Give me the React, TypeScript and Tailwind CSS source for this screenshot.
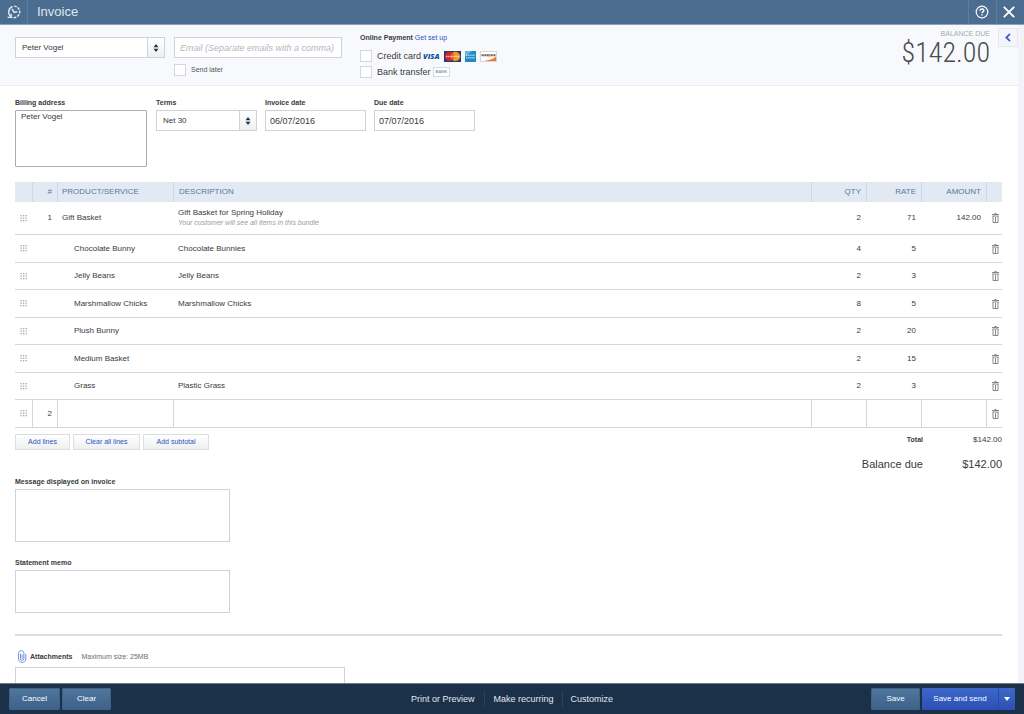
import type { ReactNode } from 'react';

type Line = { product: string; description: string; qty: number; rate: number };

const lines: Line[] = [
    { product: 'Chocolate Bunny', description: 'Chocolate Bunnies', qty: 4, rate: 5 },
    { product: 'Jelly Beans', description: 'Jelly Beans', qty: 2, rate: 3 },
    { product: 'Marshmallow Chicks', description: 'Marshmallow Chicks', qty: 8, rate: 5 },
    { product: 'Plush Bunny', description: '', qty: 2, rate: 20 },
    { product: 'Medium Basket', description: '', qty: 2, rate: 15 },
    { product: 'Grass', description: 'Plastic Grass', qty: 2, rate: 3 },
];

const field = 'border border-[#d0d3d6] bg-white text-[8px] text-[#393a3d] outline-none';
const label = 'block text-[7px] leading-[10px] font-bold text-[#393a3d]';
const check = 'size-3 shrink-0 appearance-none border border-[#d4d7dc] bg-white';
const lightButton =
    'h-4 border border-[#dcdee1] bg-linear-to-b from-white to-[#eeeff0] text-[7px] text-[#2b50c4]';
const blueButton =
    'h-[22px] rounded-[1px] border border-[#3f6285] bg-linear-to-b from-[#4f779c] to-[#3f608a] text-[8px] font-medium text-white';

function SelectBox({ id, name, value, className }: { id: string; name?: string; value: string; className: string }) {
    return (
        <div className={`relative ${className}`}>
            <select id={id} aria-label={name} className={`${field} h-[21px] w-full appearance-none px-1.5`}>
                <option>{value}</option>
            </select>
            <span className="pointer-events-none absolute inset-y-0 right-0 flex w-[18px] items-center justify-center border border-[#d0d3d6] bg-linear-to-b from-white to-[#eeeff0]">
                <svg width="6" height="8" viewBox="0 0 6 8" fill="#1d3554">
                    <path d="M3 0 5.5 3.2h-5zM3 8 .5 4.8h5z" />
                </svg>
            </span>
        </div>
    );
}

function DragHandle() {
    return (
        <svg width="7" height="7" viewBox="0 0 7 7" fill="#a5a8ab" className="ml-[5px]">
            {[0, 2.5, 5].map((y) =>
                [0.5, 3, 5.5].map((x) => <rect key={`${x}-${y}`} x={x} y={y} width="1.3" height="1.3" />),
            )}
        </svg>
    );
}

function DeleteButton() {
    return (
        <button aria-label="Delete line" className="ml-[5px] block">
            <svg width="8" height="10" viewBox="0 0 8 10" fill="none" stroke="#85888c" strokeWidth="1">
                <path d="M0 1.5h7M2.5.5h2M.5 3h6M1 3v6.5h5V3M3.5 4v5" />
            </svg>
        </button>
    );
}

function Th({ children, className = 'px-[5px]' }: { children?: ReactNode; className?: string }) {
    return <th className={`border-r border-[#cfd9e6] font-normal last:border-r-0 ${className}`}>{children}</th>;
}

function CardLogos() {
    return (
        <span className="ml-0.5 flex items-center gap-1">
            <svg width="17" height="10" viewBox="0 0 17 10">
                <text x="0" y="8" fontFamily="Open Sans, sans-serif" fontSize="7.5" fontWeight="800" fontStyle="italic" fill="#0d539c">
                    VISA
                </text>
            </svg>
            <svg width="17" height="11" viewBox="0 0 17 11">
                <rect width="17" height="11" fill="#233c70" />
                <circle cx="5.6" cy="5.5" r="4.7" fill="#d8232a" />
                <circle cx="11.4" cy="5.5" r="4.7" fill="#f09a21" />
                <path d="M8.5 1.8a4.7 4.7 0 0 1 0 7.4 4.7 4.7 0 0 1 0-7.4" fill="#df5b25" />
                <path d="M2 5.5h13" stroke="#fff" strokeWidth="1.6" strokeDasharray="1.2 .5" opacity=".7" />
            </svg>
            <svg width="11" height="11" viewBox="0 0 11 11">
                <rect width="11" height="11" fill="#2389c5" />
                <path d="M0 0h7L0 6z" fill="#62b7e0" />
                <path d="M1 4.3h9M1 6.8h9" stroke="#e7f5fc" strokeWidth="1.4" strokeDasharray="1.4 .7" opacity=".7" />
            </svg>
            <svg width="17" height="11" viewBox="0 0 17 11">
                <rect x=".5" y=".5" width="16" height="10" fill="#fff" stroke="#d5d7da" />
                <path d="M16 5.5V10H4c5-.8 9-2 12-4.5z" fill="#f27a30" />
                <path d="M1.5 4.3h14" stroke="#55504d" strokeWidth="2" strokeDasharray="1.3 .5" />
                <circle cx="9" cy="4.3" r="1.3" fill="#f27a30" />
            </svg>
        </span>
    );
}

export default function App() {
    return (
        <div className="flex h-screen flex-col bg-white font-['Liberation_Sans',Arial,sans-serif] text-[8px] leading-[10px] text-[#393a3d]">
            <header className="flex h-[25px] shrink-0 items-stretch border-b border-[#8ba3bb] bg-[#4a6d90] text-white">
                <button aria-label="Recent transactions" className="flex w-7 items-center justify-center border-r border-[#5d7d9d]">
                    <svg width="14" height="14" viewBox="0 0 14 14" fill="none" stroke="#e6edf4" strokeWidth="1.4">
                        <path d="M3.4 11.6C.6 8.6 1 3.4 5.6 1.4" />
                        <path d="M7.2 1.1a5.8 5.8 0 1 1-2.4 11.2" strokeDasharray="2.6 1.2" />
                        <path d="M.6 12.4h3.6V8.8M5 4l2.2 3.4 3.2-.8" />
                    </svg>
                </button>
                <h1 className="flex flex-1 items-center px-[9px] text-[13px] text-[#dfe8f0]">Invoice</h1>
                <button aria-label="Help" className="flex w-7 items-center justify-center border-l border-[#5d7d9d] pr-0.5">
                    <svg width="14" height="14" viewBox="0 0 14 14" fill="none" stroke="#fff" strokeWidth="1.2">
                        <circle cx="7" cy="7" r="5.8" />
                        <path d="M5.2 5.7c0-2.3 3.7-2.2 3.7-.1C8.900 7 7 6.900 7 8.300M7 9.300v1.200" strokeWidth="1.4" />
                    </svg>
                </button>
                <button aria-label="Close" className="flex w-7 items-center justify-center border-l border-[#5d7d9d] pr-1">
                    <svg width="12" height="12" viewBox="0 0 12 12" stroke="#fff" strokeWidth="1.8">
                        <path d="M.8.8l10.400 10.400M11.200.8.8 11.200" />
                    </svg>
                </button>
            </header>

            <main className="min-h-0 flex-1 overflow-y-auto border-r-[6px] border-[#f2f3f8] [scrollbar-width:none]">
                <section className="flex h-[61px] items-start border-b border-[#eceef2] bg-[#f8f9fd] pl-[15px]">
                    <div className="mt-3 w-[150px]">
                        <SelectBox id="customer" name="Customer" value="Peter Vogel" className="w-full" />
                    </div>
                    <div className="mt-3 ml-[9px] w-[168px]">
                        <input
                            type="email"
                            aria-label="Email"
                            placeholder="Email (Separate emails with a comma)"
                            className={`${field} block h-[21px] w-full px-[5px] text-[9px] placeholder:text-[#b5b7ba] placeholder:italic`}
                        />
                        <label className="mt-1.5 flex items-center gap-[5px] text-[7px] text-[#55575a]">
                            <input type="checkbox" className={check} />
                            Send later
                        </label>
                    </div>
                    <div className="mt-2 ml-[18px]">
                        <p className="text-[7px] font-bold">
                            Online Payment{' '}
                            <a href="#setup" className="font-normal text-[#2b50c4]">
                                Get set up
                            </a>
                        </p>
                        <div className="mt-[7px] flex items-center">
                            <label className="flex items-center gap-[5px] text-[9px]">
                                <input type="checkbox" className={check} />
                                Credit card
                            </label>
                            <CardLogos />
                        </div>
                        <div className="mt-1 flex items-center">
                            <label className="flex items-center gap-[5px] text-[9px]">
                                <input type="checkbox" className={check} />
                                Bank transfer
                            </label>
                            <span className="ml-0.5 border border-[#d0dce8] bg-white px-0.5 text-[4px] leading-[8px] font-bold text-[#7f9bb8]">
                                BANK
                            </span>
                        </div>
                    </div>
                    <div className="mt-1 ml-auto text-right">
                        <p className="text-[7px] text-[#a9abae]">BALANCE DUE</p>
                        <p className="font-['Roboto_Condensed','Liberation_Sans_Narrow',Roboto,sans-serif] text-[28px] leading-[28px] font-light text-[#4a4b4e]">
                            $142.00
                        </p>
                    </div>
                    <button
                        aria-label="Show panel"
                        className="mt-[3px] ml-2 flex h-[19px] w-5 items-center justify-center border border-[#e4e7ee] bg-[#f3f5fa]"
                    >
                        <svg width="6" height="9" viewBox="0 0 6 9" fill="none" stroke="#3c63c8" strokeWidth="1.8">
                            <path d="M5 .8 1.300 4.500 5 8.200" />
                        </svg>
                    </button>
                </section>

                <div className="pr-4 pl-[15px]">
                    <section className="flex items-start gap-2 pt-3">
                        <div className="mr-px w-[132px]">
                            <label htmlFor="billing" className={label}>
                                Billing address
                            </label>
                            <textarea
                                id="billing"
                                defaultValue="Peter Vogel"
                                className="mt-0.5 block h-[57px] w-full resize-none rounded-[1px] border border-[#aaacaf] bg-white px-[5px] py-px text-[8px] outline-none"
                            />
                        </div>
                        <div className="w-[101px]">
                            <label htmlFor="terms" className={label}>
                                Terms
                            </label>
                            <SelectBox id="terms" value="Net 30" className="mt-0.5" />
                        </div>
                        <div className="w-[101px]">
                            <label htmlFor="invoice-date" className={label}>
                                Invoice date
                            </label>
                            <input
                                id="invoice-date"
                                defaultValue="06/07/2016"
                                className={`${field} mt-0.5 block h-[21px] w-full px-1 text-[9px]`}
                            />
                        </div>
                        <div className="w-[101px]">
                            <label htmlFor="due-date" className={label}>
                                Due date
                            </label>
                            <input
                                id="due-date"
                                defaultValue="07/07/2016"
                                className={`${field} mt-0.5 block h-[21px] w-full px-1 text-[9px]`}
                            />
                        </div>
                    </section>

                    <table className="mt-[15px] w-full table-fixed border-separate border-spacing-0 [&_tbody_td]:border-b [&_tbody_td]:border-[#d4d6d8]">
                        <colgroup>
                            <col className="w-[18px]" />
                            <col className="w-[25px]" />
                            <col className="w-[116px]" />
                            <col />
                            <col className="w-[55px]" />
                            <col className="w-[55px]" />
                            <col className="w-[65px]" />
                            <col className="w-[15px]" />
                        </colgroup>
                        <thead className="bg-[#e2e9f3] text-left text-[#55799f]">
                            <tr className="h-5">
                                <Th />
                                <Th className="px-[5px] text-right">#</Th>
                                <Th className="px-1">PRODUCT/SERVICE</Th>
                                <Th>DESCRIPTION</Th>
                                <Th className="px-[5px] text-right">QTY</Th>
                                <Th className="px-[5px] text-right">RATE</Th>
                                <Th className="px-[5px] text-right">AMOUNT</Th>
                                <Th />
                            </tr>
                        </thead>
                        <tbody>
                            <tr className="h-[33px]">
                                <td><DragHandle /></td>
                                <td className="pr-1.5 text-right">1</td>
                                <td className="px-1">Gift Basket</td>
                                <td className="px-1">
                                    Gift Basket for Spring Holiday
                                    <div className="text-[7px] text-[#9a9c9f] italic">Your customer will see all items in this bundle</div>
                                </td>
                                <td className="pr-1.5 text-right">2</td>
                                <td className="pr-1.5 text-right">71</td>
                                <td className="pr-1.5 text-right">142.00</td>
                                <td><DeleteButton /></td>
                            </tr>
                            {lines.map((line) => (
                                <tr key={line.product} className="odd:h-[27px] even:h-7">
                                    <td><DragHandle /></td>
                                    <td />
                                    <td className="pl-4">{line.product}</td>
                                    <td className="px-1">{line.description}</td>
                                    <td className="pr-1.5 text-right">{line.qty}</td>
                                    <td className="pr-1.5 text-right">{line.rate}</td>
                                    <td />
                                    <td><DeleteButton /></td>
                                </tr>
                            ))}
                            <tr className="h-7 [&>td]:border-r [&>td]:border-r-[#e2e4e6] [&>td]:border-b-[#bfc2c4] [&>td:last-child]:border-r-0">
                                <td><DragHandle /></td>
                                <td className="pr-[5px] text-right">2</td>
                                <td />
                                <td />
                                <td />
                                <td />
                                <td />
                                <td><DeleteButton /></td>
                            </tr>
                        </tbody>
                    </table>

                    <div className="flex items-start justify-between pt-1.5">
                        <div className="flex gap-[3px]">
                            <button className={`${lightButton} w-[55px]`}>Add lines</button>
                            <button className={`${lightButton} w-[67px]`}>Clear all lines</button>
                            <button className={`${lightButton} w-[66px]`}>Add subtotal</button>
                        </div>
                        <dl className="grid grid-cols-[auto_79px] items-center gap-y-3 pt-px text-right">
                            <dt className="text-[7px] font-bold">Total</dt>
                            <dd>$142.00</dd>
                            <dt className="text-[11px] leading-[14px]">Balance due</dt>
                            <dd className="text-[11px] leading-[14px]">$142.00</dd>
                        </dl>
                    </div>

                    <div className="mt-1.5 w-[215px]">
                        <label htmlFor="message" className={label}>
                            Message displayed on invoice
                        </label>
                        <textarea id="message" className={`${field} mt-0.5 block h-[53px] w-full resize-none`} />
                        <label htmlFor="memo" className={`${label} mt-4`}>
                            Statement memo
                        </label>
                        <textarea id="memo" className={`${field} mt-0.5 block h-[43px] w-full resize-none`} />
                    </div>

                    <section className="mt-[21px] border-t-2 border-[#dcdfe0] pt-3.5">
                        <div className="flex items-center">
                            <svg width="9" height="13" viewBox="0 0 9 13" fill="none" stroke="#7090da" strokeWidth="1" className="ml-[3px]">
                                <path d="M2.500 3.500v5.200a1.700 1.700 0 0 0 3.400 0V3.300C5.900-.3.6-.3.6 3.300v5.600c0 4.700 7.300 4.700 7.300 0V4" />
                                <path d="M4.200 4.500v4.300" />
                            </svg>
                            <h2 className="ml-[3px] text-[7px] font-bold">Attachments</h2>
                            <span className="ml-[9px] text-[7px] text-[#6b6c72]">Maximum size: 25MB</span>
                        </div>
                        <div className="mt-1 h-10 w-[330px] border border-[#d0d3d6] pt-[13px] text-center text-[#8d9096]">
                            Drag/Drop files here or click the icon
                        </div>
                    </section>
                </div>
            </main>

            <footer className="grid h-[31px] shrink-0 grid-cols-[1fr_auto_1fr] items-center border-t border-[#6f7c88] bg-[#1b3049] px-[9px] text-white">
                <div className="flex gap-0.5">
                    <button className={`${blueButton} w-[51px]`}>Cancel</button>
                    <button className={`${blueButton} w-[49px]`}>Clear</button>
                </div>
                <nav className="flex text-[9px] leading-4 text-[#e3e8ee]">
                    <a href="#print" className="pr-2.5">Print or Preview</a>
                    <a href="#recurring" className="border-x border-[#2c435d] px-2">Make recurring</a>
                    <a href="#customize" className="pl-2">Customize</a>
                </nav>
                <div className="flex justify-end">
                    <button className={`${blueButton} mr-0.5 w-[49px]`}>Save</button>
                    <button className="h-[22px] w-[77px] rounded-l-[1px] border-r border-[#2b4aa6] bg-linear-to-b from-[#3d68ca] to-[#2d4fb6] text-[8px] font-medium">
                        Save and send
                    </button>
                    <button aria-label="More save options" className="flex h-[22px] w-4 items-center justify-center rounded-r-[1px] bg-linear-to-b from-[#3d68ca] to-[#2d4fb6]">
                        <svg width="6" height="4" viewBox="0 0 6 4" fill="#fff">
                            <path d="M0 0h6L3 4z" />
                        </svg>
                    </button>
                </div>
            </footer>
        </div>
    );
}
